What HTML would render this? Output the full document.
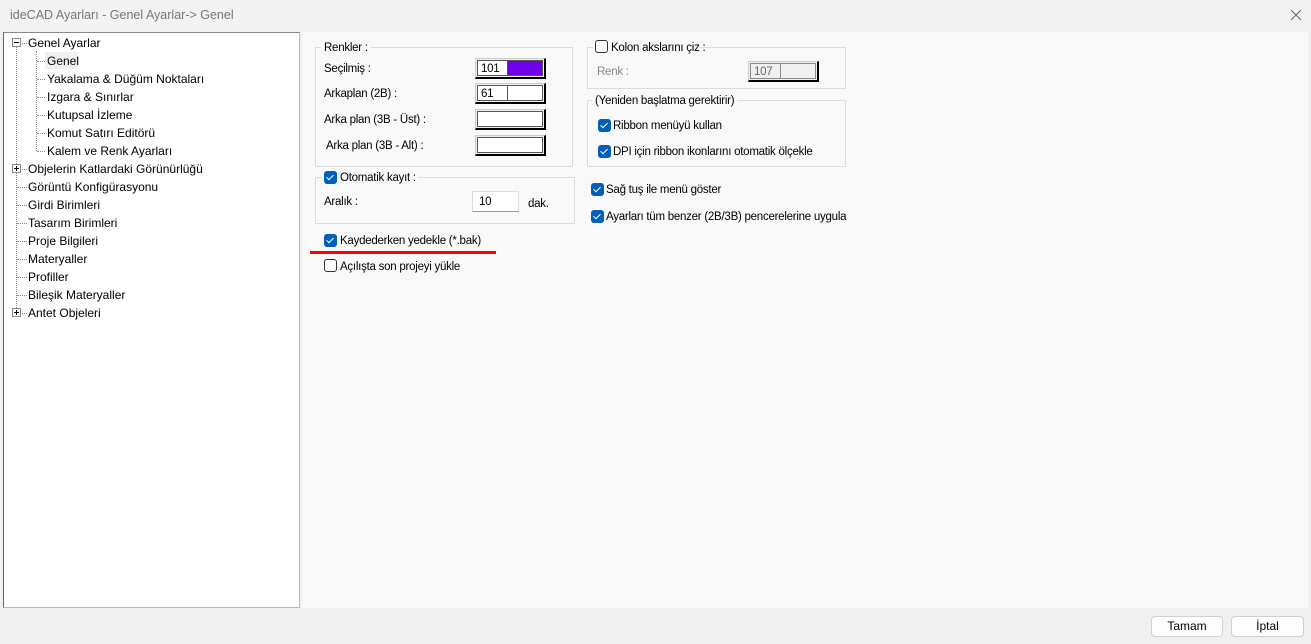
<!DOCTYPE html><html><head><meta charset="utf-8"><style>
*{margin:0;padding:0;box-sizing:border-box}
body{width:1311px;height:644px;overflow:hidden;background:#f0f0f0;font-family:"Liberation Sans",sans-serif;font-size:12px;color:#000;position:relative}
.a{position:absolute;white-space:nowrap}
.t{position:absolute;white-space:nowrap;line-height:18px;height:18px}
.r .t,.r .a{font-size:11.5px;letter-spacing:-0.25px}
.gb{position:absolute;border:1px solid #dcdcdc}
.cb{position:absolute;width:13px;height:13px;border-radius:3px;background:#005fb8}
.cb:after{content:"";position:absolute;left:4px;top:2px;width:3px;height:6px;border:solid #fff;border-width:0 1.5px 1.5px 0;transform:rotate(45deg)}
.ucb{position:absolute;width:13px;height:13px;border-radius:3px;border:1px solid #333;background:#fff}
.cbox{position:absolute;width:71px;height:21px;border:1px solid #ccc;border-right:2px solid #000;border-bottom:2px solid #000;background:#f0f0f0}
.cbox .in{position:absolute;left:1px;top:1px;right:1px;bottom:1px;border:1px solid #555;background:#fff}
.hd{position:absolute;border-left:1px dotted #888}
.hh{position:absolute;border-top:1px dotted #888;height:0}
.pm{position:absolute;width:9px;height:9px;border:1px solid #8a8a8a;background:#fff}
.pm:before{content:"";position:absolute;left:1px;top:3px;width:5px;height:1px;background:#000}
.pm.p:after{content:"";position:absolute;left:3px;top:1px;width:1px;height:5px;background:#000}
.btn{position:absolute;height:21px;border:1px solid #d0d0d0;border-radius:4px;background:#fdfdfd;text-align:center;line-height:19px}
</style></head><body>
<div class="a" style="left:0;top:0;width:1311px;height:32px;background:#f3f3f3"></div>
<div class="a" style="left:10px;top:8px;color:#777;font-size:12.5px">ideCAD Ayarları - Genel Ayarlar-&gt; Genel</div>
<svg class="a" style="left:1290px;top:9px" width="12" height="12"><path d="M1 1L11 11M11 1L1 11" stroke="#666" stroke-width="1"/></svg>
<div class="a" style="left:3px;top:32px;width:297px;height:576px;background:#fff;border:1px solid #bbb;border-left-color:#666;border-top-color:#888"></div>
<div class="a" style="left:302px;top:32px;width:1006px;height:576px;background:#f9f9f9"></div>
<!-- tree -->
<div class="hd" style="left:16px;top:46px;height:266px"></div>
<div class="hd" style="left:36px;top:51px;height:100px"></div>
<div class="pm" style="left:12px;top:38px"></div>
<div class="pm p" style="left:12px;top:164px"></div>
<div class="pm p" style="left:12px;top:308px"></div>
<div class="hh" style="left:22px;top:43px;width:5px"></div>
<div class="hh" style="left:22px;top:169px;width:5px"></div>
<div class="hh" style="left:22px;top:313px;width:5px"></div>
<div class="hh" style="left:17px;top:187px;width:10px"></div>
<div class="hh" style="left:17px;top:205px;width:10px"></div>
<div class="hh" style="left:17px;top:223px;width:10px"></div>
<div class="hh" style="left:17px;top:241px;width:10px"></div>
<div class="hh" style="left:17px;top:259px;width:10px"></div>
<div class="hh" style="left:17px;top:277px;width:10px"></div>
<div class="hh" style="left:17px;top:295px;width:10px"></div>
<div class="hh" style="left:37px;top:61px;width:8px"></div>
<div class="hh" style="left:37px;top:79px;width:8px"></div>
<div class="hh" style="left:37px;top:97px;width:8px"></div>
<div class="hh" style="left:37px;top:115px;width:8px"></div>
<div class="hh" style="left:37px;top:133px;width:8px"></div>
<div class="hh" style="left:37px;top:151px;width:8px"></div>
<div class="a" style="left:45px;top:52px;width:33px;height:17px;background:#f0f0f0"></div>
<div class="t" style="left:28px;top:34px">Genel Ayarlar</div>
<div class="t" style="left:47px;top:52px">Genel</div>
<div class="t" style="left:47px;top:70px">Yakalama &amp; Düğüm Noktaları</div>
<div class="t" style="left:47px;top:88px">Izgara &amp; Sınırlar</div>
<div class="t" style="left:47px;top:106px">Kutupsal İzleme</div>
<div class="t" style="left:47px;top:124px">Komut Satırı Editörü</div>
<div class="t" style="left:47px;top:142px">Kalem ve Renk Ayarları</div>
<div class="t" style="left:28px;top:160px">Objelerin Katlardaki Görünürlüğü</div>
<div class="t" style="left:28px;top:178px">Görüntü Konfigürasyonu</div>
<div class="t" style="left:28px;top:196px">Girdi Birimleri</div>
<div class="t" style="left:28px;top:214px">Tasarım Birimleri</div>
<div class="t" style="left:28px;top:232px">Proje Bilgileri</div>
<div class="t" style="left:28px;top:250px">Materyaller</div>
<div class="t" style="left:28px;top:268px">Profiller</div>
<div class="t" style="left:28px;top:286px">Bileşik Materyaller</div>
<div class="t" style="left:28px;top:304px">Antet Objeleri</div>
<div class="r">
<!-- Renkler -->
<div class="gb" style="left:315px;top:47px;width:258px;height:120px"></div>
<div class="t" style="left:321px;top:39px;background:#f9f9f9;padding:0 3px 0 3px">Renkler :</div>
<div class="t" style="left:324px;top:60px">Seçilmiş :</div>
<div class="t" style="left:324px;top:85px">Arkaplan (2B) :</div>
<div class="t" style="left:324px;top:111px">Arka plan (3B - Üst) :</div>
<div class="t" style="left:326px;top:137px">Arka plan (3B - Alt) :</div>
<div class="cbox" style="left:475px;top:58px"><div class="in"><div class="a" style="left:3px;top:2px">101</div><div class="a" style="left:29px;top:0;bottom:0;right:0;background:#7000e8;border-left:1px solid #555"></div></div></div>
<div class="cbox" style="left:475px;top:83px"><div class="in"><div class="a" style="left:3px;top:2px">61</div><div class="a" style="left:29px;top:0;bottom:0;right:0;border-left:1px solid #555"></div></div></div>
<div class="cbox" style="left:475px;top:109px"><div class="in"></div></div>
<div class="cbox" style="left:475px;top:135px"><div class="in"></div></div>
<!-- Otomatik -->
<div class="gb" style="left:315px;top:177px;width:260px;height:47px"></div>
<div class="a" style="left:322px;top:169px;width:96px;height:16px;background:#f9f9f9"></div>
<div class="cb" style="left:324px;top:171px"></div>
<div class="t" style="left:340px;top:169px">Otomatik kayıt :</div>
<div class="t" style="left:324px;top:193px">Aralık :</div>
<div class="a" style="left:472px;top:191px;width:47px;height:21px;background:#fff;border:1px solid #ddd;border-bottom-color:#999;padding:4px 0 0 6px">10</div>
<div class="t" style="left:528px;top:195px">dak.</div>
<div class="cb" style="left:324px;top:234px"></div>
<div class="t" style="left:340px;top:232px">Kaydederken yedekle (*.bak)</div>
<div class="a" style="left:310px;top:251px;width:186px;height:3px;background:#f00"></div>
<div class="ucb" style="left:324px;top:259px"></div>
<div class="t" style="left:340px;top:258px">Açılışta son projeyi yükle</div>
<!-- Kolon -->
<div class="gb" style="left:587px;top:47px;width:259px;height:42px"></div>
<div class="a" style="left:593px;top:39px;width:106px;height:16px;background:#f9f9f9"></div>
<div class="ucb" style="left:595px;top:40px"></div>
<div class="t" style="left:611px;top:39px">Kolon akslarını çiz :</div>
<div class="t" style="left:597px;top:63px;color:#888">Renk :</div>
<div class="cbox" style="left:748px;top:61px;background:#f0f0f0"><div class="in" style="background:#f0f0f0;border-color:#888"><div class="a" style="left:3px;top:2px;color:#666">107</div><div class="a" style="left:29px;top:0;bottom:0;right:0;border-left:1px solid #888"></div></div></div>
<!-- Yeniden -->
<div class="gb" style="left:587px;top:100px;width:259px;height:67px"></div>
<div class="t" style="left:592px;top:92px;background:#f9f9f9;padding:0 3px">(Yeniden başlatma gerektirir)</div>
<div class="cb" style="left:598px;top:119px"></div>
<div class="t" style="left:613px;top:117px">Ribbon menüyü kullan</div>
<div class="cb" style="left:598px;top:145px"></div>
<div class="t" style="left:613px;top:143px">DPI için ribbon ikonlarını otomatik ölçekle</div>
<div class="cb" style="left:591px;top:183px"></div>
<div class="t" style="left:606px;top:181px">Sağ tuş ile menü göster</div>
<div class="cb" style="left:591px;top:210px"></div>
<div class="t" style="left:606px;top:208px">Ayarları tüm benzer (2B/3B) pencerelerine uygula</div>
</div>
<!-- buttons -->
<div class="btn" style="left:1151px;top:616px;width:72px">Tamam</div>
<div class="btn" style="left:1231px;top:616px;width:73px">İptal</div>
</body></html>
